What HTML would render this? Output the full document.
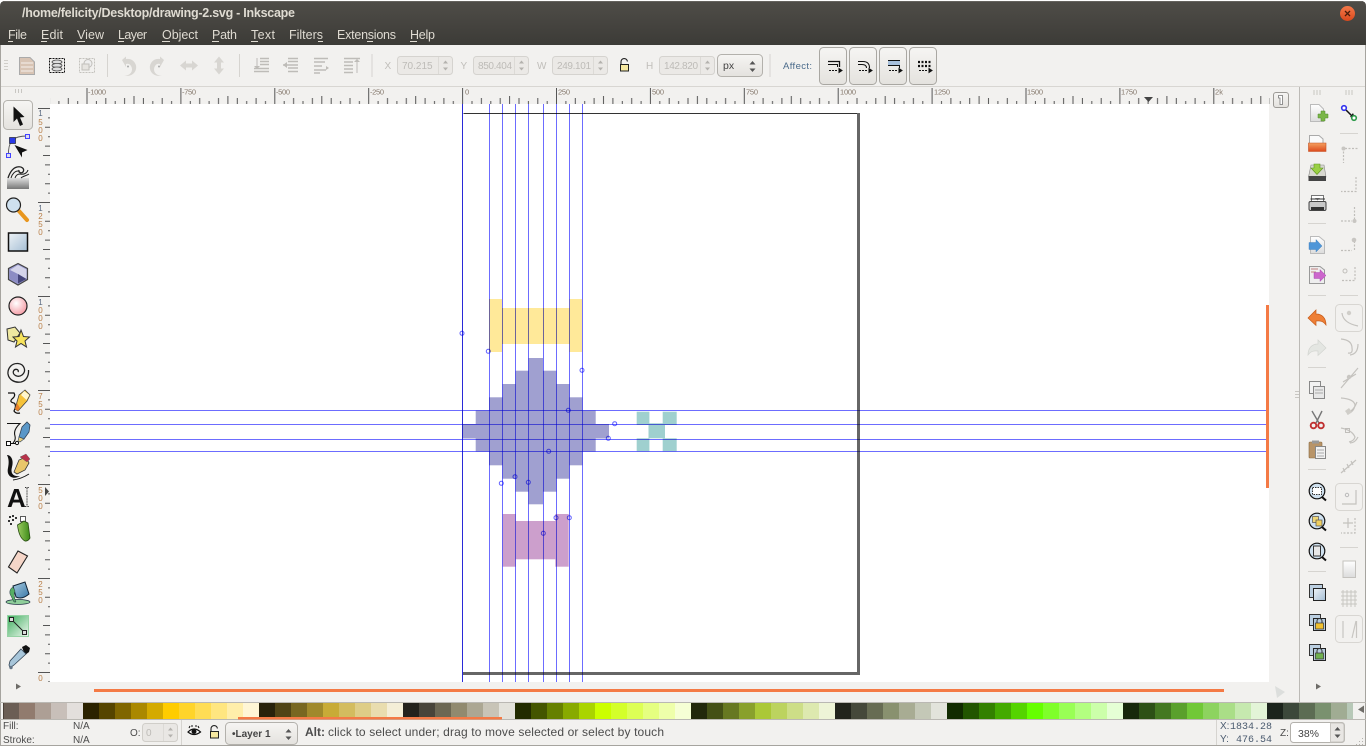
<!DOCTYPE html>
<html lang="en">
<head>
<meta charset="utf-8">
<title>drawing-2.svg - Inkscape</title>
<style>
html,body{margin:0;padding:0;background:#fff;width:1366px;height:746px;overflow:hidden}
svg{display:block}
text{font-family:"Liberation Sans",sans-serif}
.m{font-size:12.5px;fill:#dfdbd2}
.r{font-size:7.5px;fill:#85786c}
.v{font-size:8px;text-anchor:middle;fill:#b97f48}
.v1{font-size:8px;text-anchor:middle;fill:#5a6a80}
.s{font-size:10px;fill:#4c4c4c}
.d{font-size:10px;fill:#bdbbb7}
.l{font-size:10px;fill:#c0beba}
.sep{stroke:#d6d4d0;stroke-width:1}
.dis{fill:#d8d6d2}
.ln{stroke:#c4c2be;stroke-width:1.2;fill:none}
.dash{stroke:#c0bebA;stroke-width:1.2;stroke-dasharray:2 1.5;fill:none}
.sw rect{height:16px;width:16px}
.g{fill:none;stroke:#6c6cff;stroke-width:1;mix-blend-mode:multiply}
.c{fill:none;stroke:#6060ff;stroke-width:1;mix-blend-mode:multiply}
</style>
</head>
<body>
<svg width="1366" height="746" viewBox="0 0 1366 746" xmlns="http://www.w3.org/2000/svg">
<defs>
<linearGradient id="tb" x1="0" y1="0" x2="0" y2="1"><stop offset="0" stop-color="#4f4d48"/><stop offset="1" stop-color="#3c3b37"/></linearGradient>
<linearGradient id="btn" x1="0" y1="0" x2="0" y2="1"><stop offset="0" stop-color="#f6f5f3"/><stop offset="1" stop-color="#e4e2de"/></linearGradient>
<linearGradient id="cl" x1="0" y1="0" x2="0" y2="1"><stop offset="0" stop-color="#f5794a"/><stop offset="1" stop-color="#d9481c"/></linearGradient>
<linearGradient id="blu" x1="0" y1="0" x2="1" y2="1"><stop offset="0" stop-color="#eef3f7"/><stop offset="1" stop-color="#a5bed4"/></linearGradient>
<linearGradient id="gry" x1="0" y1="0" x2="0" y2="1"><stop offset="0" stop-color="#e0e0e0"/><stop offset="1" stop-color="#777"/></linearGradient>
<linearGradient id="grn" x1="0" y1="0" x2="1" y2="1"><stop offset="0" stop-color="#3fae5e"/><stop offset="1" stop-color="#eef8ef"/></linearGradient>
<linearGradient id="org" x1="0" y1="0" x2="0" y2="1"><stop offset="0" stop-color="#f4a060"/><stop offset="1" stop-color="#dc4a1c"/></linearGradient>
<linearGradient id="pg" x1="0" y1="0" x2="0" y2="1"><stop offset="0" stop-color="#fff"/><stop offset="1" stop-color="#dcdcdc"/></linearGradient>
<linearGradient id="can" x1="0" y1="0" x2="1" y2="0"><stop offset="0" stop-color="#9ccc60"/><stop offset="1" stop-color="#3c8a18"/></linearGradient>
<linearGradient id="bkt" x1="0" y1="0" x2="1" y2="1"><stop offset="0" stop-color="#a9cce0"/><stop offset="1" stop-color="#3a78a8"/></linearGradient>
<radialGradient id="pk" cx=".4" cy=".35" r=".8"><stop offset="0" stop-color="#fff"/><stop offset="1" stop-color="#f28a95"/></radialGradient>
<pattern id="rt" patternUnits="userSpaceOnUse" x="86.5" y="88" width="93.9" height="16">
<path stroke="#555" stroke-width="1" fill="none" d="M.5 0V16M9.9 13V16M19.3 10V16M28.7 13V16M38.1 10V16M47.5 8V16M56.9 10V16M66.3 13V16M75.7 10V16M85.1 13V16"/>
</pattern>
<pattern id="rl" patternUnits="userSpaceOnUse" x="38" y="108" width="12" height="94">
<path stroke="#555" stroke-width="1" fill="none" d="M0 .5H12M10 9.9H12M7 19.3H12M10 28.7H12M7 38.1H12M5 47.5H12M7 56.9H12M10 66.3H12M7 75.7H12M10 85.1H12"/>
</pattern>
</defs>

<!-- window -->
<rect x="0" y="45" width="1366" height="701" fill="#f2f1ef"/>
<path d="M0 45V6Q0 1 5 1H1361Q1366 1 1366 6V45Z" fill="url(#tb)"/>
<path d="M3 1.5H1363" stroke="#65635e"/>
<text x="22" y="17" font-size="12.5" font-weight="700" fill="#dfdbd2" textLength="273" lengthAdjust="spacing">/home/felicity/Desktop/drawing-2.svg - Inkscape</text>
<circle cx="1347.5" cy="13.5" r="7.5" fill="url(#cl)"/>
<path d="M1345 11L1350 16M1350 11L1345 16" stroke="#4a1c0a" stroke-width="1.3"/>

<!-- menu -->
<g>
<text class="m" x="8" y="39" textLength="19">File</text>
<text class="m" x="41" y="39" textLength="22">Edit</text>
<text class="m" x="77" y="39" textLength="27">View</text>
<text class="m" x="118" y="39" textLength="29">Layer</text>
<text class="m" x="162" y="39" textLength="36">Object</text>
<text class="m" x="212" y="39" textLength="25">Path</text>
<text class="m" x="251" y="39" textLength="24">Text</text>
<text class="m" x="289" y="39" textLength="34">Filters</text>
<text class="m" x="337" y="39" textLength="59">Extensions</text>
<text class="m" x="410" y="39" textLength="25">Help</text>
<path stroke="#dfdbd2" d="M8 41.5H13M41 41.5H47M77 41.5H85M118 41.5H124M162 41.5H170M212 41.5H219M251 41.5H258M318 41.5H323M367 41.5H373M410 41.5H417"/>
</g>

<!-- top toolbar -->
<path d="M4 60.5H8M4 63.5H8M4 66.5H8M4 69.5H8" stroke="#d0cec9"/>
<path d="M19.5 57.5H30L34.5 62V74.5H19.5Z" fill="#d8c4b4" stroke="#aaa"/>
<path d="M21 63H33M21 67H33M21 71H33" stroke="#fff" stroke-width=".8"/>
<rect x="49.5" y="58.5" width="15" height="14" fill="none" stroke="#111" stroke-dasharray="2 1"/>
<ellipse cx="57" cy="62" rx="5" ry="2" fill="#ddd" stroke="#444" stroke-width=".8"/>
<ellipse cx="57" cy="65.5" rx="5" ry="2" fill="#ddd" stroke="#444" stroke-width=".8"/>
<ellipse cx="57" cy="69" rx="5" ry="2" fill="#ddd" stroke="#444" stroke-width=".8"/>
<rect x="79.5" y="58.5" width="15" height="14" fill="none" stroke="#c4c2be" stroke-dasharray="2 1"/>
<circle cx="88" cy="63.5" r="4" fill="#eee" stroke="#c0bebA"/><rect x="82" y="64" width="7" height="6" fill="#e6e4e0" stroke="#c0bebA"/>
<path class="sep" d="M107.5 54V77"/>
<path class="dis" d="M122 60L126 56.5V59A8.5 8.5 0 1 1 124 75A6 6 0 0 0 131 66A4.5 4.5 0 0 0 126 64V67Z"/>
<circle cx="128" cy="66.5" r="1" fill="#aaa"/>
<path class="dis" d="M164 60L160 56.5V59A8.5 8.5 0 1 0 162 75A6 6 0 0 1 155 66A4.5 4.5 0 0 1 160 64V67Z"/>
<circle cx="159" cy="66.5" r="1" fill="#aaa"/>
<path class="dis" d="M180 65.5L186 60.5V63.5H192V60.5L198 65.5L192 70.5V67.5H186V70.5Z"/>
<path class="dis" d="M219 56.5L224 62.5H221V68.5H224L219 74.5L214 68.5H217V62.5H214Z"/>
<path class="sep" d="M239.5 54V77"/>
<g stroke="#bebcb8" stroke-width="1.6" fill="none">
<path d="M260 58.5H269M260 61.5H269M260 64.5H269M254 68.5H269M254 71.5H269"/>
<path d="M257 58V67" stroke-width="1"/>
<path d="M288 58.5H298M288 61.5H298M288 68H298M288 71.5H298M283 65H298"/>
<path d="M314 58.5H328M314 62H325M314 66H322M314 70H326M314 73H320"/>
<path d="M344 58.5H360M344 62H353M344 65.5H353M344 69H353M344 72.5H353"/>
<path d="M357 62V73" stroke-width="1"/>
</g>
<path d="M254 66L257 69L260 66Z" fill="#bebcb8"/>
<path d="M283 65L287 62V68Z" fill="#bebcb8"/>
<path d="M326 66L329 68L326 70Z" fill="#bebcb8"/>
<path d="M354 62L357 59L360 62Z" fill="#bebcb8"/>
<path class="sep" d="M372 54V77"/>

<!-- spin boxes -->
<text class="l" x="384.5" y="69">X</text>
<rect x="397.5" y="56.5" width="55" height="18" rx="3" fill="#ebe9e6" stroke="#d5d3cf"/>
<path d="M438.5 57V74" stroke="#dcdad6"/>
<path d="M445.5 60.5L448 63.5H443ZM445.5 70.5L448 67.5H443Z" fill="#b4b2ae"/>
<text class="d" x="402" y="69">70.215</text>
<text class="l" x="460.5" y="69">Y</text>
<rect x="473.5" y="56.5" width="55" height="18" rx="3" fill="#ebe9e6" stroke="#d5d3cf"/>
<path d="M514.5 57V74" stroke="#dcdad6"/>
<path d="M521.5 60.5L524 63.5H519ZM521.5 70.5L524 67.5H519Z" fill="#b4b2ae"/>
<text class="d" x="478" y="69" textLength="34">850.404</text>
<text class="l" x="537" y="69">W</text>
<rect x="552.5" y="56.5" width="55" height="18" rx="3" fill="#ebe9e6" stroke="#d5d3cf"/>
<path d="M593.5 57V74" stroke="#dcdad6"/>
<path d="M600.5 60.5L603 63.5H598ZM600.5 70.5L603 67.5H598Z" fill="#b4b2ae"/>
<text class="d" x="557" y="69" textLength="34">249.101</text>
<path d="M621 64V62A3.2 3.2 0 0 1 627.4 61.5" fill="none" stroke="#222" stroke-width="1.1"/>
<rect x="620.5" y="64.5" width="8" height="6.5" fill="#f6e8a0" stroke="#222"/>
<text class="l" x="646" y="69">H</text>
<rect x="659.5" y="56.5" width="55" height="18" rx="3" fill="#ebe9e6" stroke="#d5d3cf"/>
<path d="M700.5 57V74" stroke="#dcdad6"/>
<path d="M707.5 60.5L710 63.5H705ZM707.5 70.5L710 67.5H705Z" fill="#b4b2ae"/>
<text class="d" x="664" y="69" textLength="34">142.820</text>
<rect x="717.5" y="54.5" width="45" height="22" rx="4" fill="url(#btn)" stroke="#b3b1ac"/>
<text x="723" y="69" font-size="10.5" fill="#444">px</text>
<path d="M752.5 61L755.5 64.5H749.5ZM752.5 72L755.5 68.5H749.5Z" fill="#555"/>
<path class="sep" d="M770 54V77"/>
<text x="783" y="69" font-size="9.5" fill="#4a6a8a" textLength="29">Affect:</text>

<!-- affect buttons -->
<g fill="url(#btn)" stroke="#a9a7a2">
<rect x="819.5" y="47.5" width="27" height="37" rx="4"/>
<rect x="849.5" y="47.5" width="27" height="37" rx="4"/>
<rect x="879.5" y="47.5" width="27" height="37" rx="4"/>
<rect x="909.5" y="47.5" width="27" height="37" rx="4"/>
</g>
<g fill="none" stroke="#111">
<path d="M828 61.5H839.5V67" stroke-width="1.3"/><path d="M828 64.5H837.5V67"/>
<path d="M829 70.5H838" stroke-dasharray="2 1"/><path d="M839 68.5L842 70.5L839 72.5Z" fill="#111"/>
<path d="M858 61.5H863Q869.5 61.5 869.5 68"/><path d="M858 64.5H862Q866.5 64.5 866.5 68"/>
<path d="M859 70.5H868" stroke-dasharray="2 1"/><path d="M869 68.5L872 70.5L869 72.5Z" fill="#111"/>
<path d="M888 65.5H899.5V68"/>
<path d="M889 70.5H898" stroke-dasharray="2 1"/><path d="M899 68.5L902 70.5L899 72.5Z" fill="#111"/>
<path d="M919 70.5H928" stroke-dasharray="2 1"/><path d="M929 68.5L932 70.5L929 72.5Z" fill="#111"/>
<path d="M918 62H931M918 66H931" stroke-dasharray="2 1.5" stroke-width="2.2"/>
</g>
<rect x="888" y="60.5" width="12" height="4.5" fill="#a7c0dc"/>
<path d="M888 60.5H900" stroke="#111"/>

<!-- ruler lines -->
<path d="M0 86.5H1366" stroke="#d8d6d2"/>
<path d="M15.5 89V93M18.5 89V93M21.5 89V93" stroke="#c8c6c2"/>

<!-- rulers -->
<rect x="50" y="88" width="1220" height="16" fill="url(#rt)"/>
<rect x="38" y="104" width="12" height="578" fill="url(#rl)"/>
<g>
<text x="88" y="94.5" textLength="18" class="r">-1000</text>
<text x="182" y="94.5" class="r" textLength="14">-750</text>
<text x="276" y="94.5" class="r" textLength="14">-500</text>
<text x="370" y="94.5" class="r" textLength="14">-250</text>
<text x="465" y="94.5" class="r">0</text>
<text x="558" y="94.5" class="r" textLength="12">250</text>
<text x="652" y="94.5" class="r" textLength="12">500</text>
<text x="746" y="94.5" class="r" textLength="12">750</text>
<text x="840" y="94.5" class="r" textLength="16">1000</text>
<text x="934" y="94.5" class="r" textLength="16">1250</text>
<text x="1027" y="94.5" class="r" textLength="16">1500</text>
<text x="1121" y="94.5" class="r" textLength="16">1750</text>
<text x="1215" y="94.5" class="r" textLength="8">2k</text>
</g>
<g>
<text class="v1" x="40.5" y="116">1</text><text class="v" x="40.5" y="125">5</text><text class="v" x="40.5" y="133">0</text><text class="v" x="40.5" y="141">0</text>
<text class="v1" x="40.5" y="211">1</text><text class="v" x="40.5" y="219">2</text><text class="v" x="40.5" y="227">5</text><text class="v" x="40.5" y="235">0</text>
<text class="v1" x="40.5" y="305">1</text><text class="v" x="40.5" y="313">0</text><text class="v" x="40.5" y="321">0</text><text class="v" x="40.5" y="329">0</text>
<text class="v" x="40.5" y="399">7</text><text class="v" x="40.5" y="407">5</text><text class="v" x="40.5" y="415">0</text>
<text class="v" x="40.5" y="493">5</text><text class="v" x="40.5" y="501">0</text><text class="v" x="40.5" y="509">0</text>
<text class="v" x="40.5" y="587">2</text><text class="v" x="40.5" y="595">5</text><text class="v" x="40.5" y="603">0</text>
<text class="v" x="40.5" y="681">0</text>
</g>
<path d="M1144 97H1153L1148.5 102Z" fill="#444"/>
<path d="M45 487V496L49 491.5Z" fill="#444"/>

<!-- canvas -->
<rect x="50" y="104" width="1219" height="578" fill="#fff"/>
<path d="M463.5 113.5H857" stroke="#333" fill="none"/>
<rect x="857" y="113" width="3" height="562" fill="#666"/>
<rect x="463" y="672" width="397" height="3" fill="#666"/>

<!-- shapes -->
<g fill="#ffe999">
<rect x="489" y="299" width="13" height="53"/><rect x="502" y="308" width="67.5" height="36"/><rect x="569.5" y="299" width="12.5" height="53"/>
</g>
<g fill="#a0a0d0">
<rect x="528.5" y="358" width="14.5" height="146.3"/>
<rect x="515.5" y="370.7" width="41" height="121"/>
<rect x="502.5" y="384" width="67" height="94.7"/>
<rect x="489" y="397.3" width="93.5" height="68"/>
<rect x="475.7" y="410.5" width="120" height="41"/>
<rect x="462.5" y="424" width="146.5" height="14.5"/>
</g>
<g fill="#9fd0cf">
<rect x="636.7" y="411.7" width="12.7" height="13.3"/><rect x="662.7" y="411.7" width="14" height="13.3"/>
<rect x="648.5" y="423.3" width="16.5" height="15"/>
<rect x="636.7" y="438.3" width="12.7" height="13"/><rect x="662.7" y="438.3" width="14" height="13"/>
</g>
<g fill="#cc9fcc">
<rect x="502.7" y="514" width="13" height="52.7"/><rect x="515.7" y="521" width="40" height="38.3"/><rect x="555.3" y="514" width="13.4" height="52.7"/>
</g>

<!-- guides -->
<path class="g" style="stroke:#2a2ad8" d="M462.5 104V682"/>
<path class="g" d="M489.5 104V682M502.5 104V682M515.5 104V682M528.5 104V682M543.5 104V682M556.5 104V682M569.5 104V682M582.5 104V682"/>
<path class="g" d="M50 410.5H1266M50 424.5H1266M50 439.5H1266M50 451.5H1266"/>
<g class="c">
<circle cx="462" cy="333.3" r="2"/><circle cx="488.3" cy="351.3" r="2"/><circle cx="582" cy="370.3" r="2"/><circle cx="568.3" cy="410.3" r="2"/><circle cx="614.7" cy="423.7" r="2"/><circle cx="608.3" cy="438.3" r="2"/><circle cx="548.7" cy="451.3" r="2"/><circle cx="515" cy="476.7" r="2"/><circle cx="501.3" cy="483.3" r="2"/><circle cx="528.3" cy="482.3" r="2"/><circle cx="556" cy="517.7" r="2"/><circle cx="569.3" cy="517.7" r="2"/><circle cx="543.3" cy="533.3" r="2"/>
</g>

<!-- scrollbars -->
<rect x="1266" y="305" width="3" height="183" fill="#f47a45"/>
<rect x="94" y="689" width="1130" height="3" fill="#f47a45"/>
<path d="M1275 686L1285 692L1277 698Z" fill="#dcdedc"/>
<rect x="1273.5" y="92.5" width="15" height="15" rx="2.5" fill="url(#btn)" stroke="#9c9a96"/>
<path d="M1278.5 95.5H1282.5V104.5H1280V98H1278.5Z" fill="#fff" stroke="#777" stroke-width=".8"/>
<path d="M1295 391.5H1299M1295 394.5H1299M1295 397.5H1299" stroke="#c8c6c2"/>

<!-- edges -->
<rect x="0" y="45" width="1" height="700" fill="#a6a49f"/>
<rect x="1365" y="45" width="1" height="700" fill="#a6a49f"/>
<rect x="1299" y="87" width="1" height="615" fill="#bcbab6"/>

<!-- left tools -->
<rect x="3.5" y="100.5" width="29" height="29" rx="4" fill="url(#btn)" stroke="#b4b2ad"/>
<path d="M13.5 106.5V122L17 118.5L20 126L23 124.5L20 117.5L24.5 117Z" fill="#111"/>
<!-- node -->
<path d="M12 140Q17 136 27 136M12 140Q8 146 8.5 155" fill="none" stroke="#555" stroke-width=".9"/>
<rect x="9.5" y="137.5" width="6" height="6" fill="#2a3ae8" stroke="#111" stroke-width=".6"/>
<rect x="25.5" y="134.5" width="4" height="4" fill="#dde" stroke="#44f"/>
<rect x="6.5" y="153.5" width="4" height="4" fill="#dde" stroke="#44f"/>
<path d="M14.5 145L27.5 150L22 152.5L22 157.5Z" fill="#111"/>
<!-- tweak -->
<rect x="7" y="178" width="22" height="11" fill="url(#gry)"/>
<path d="M8 178C10 172 13 168 17 167C22 166 25 169 23 172C21 174 18 172 19 170" fill="none" stroke="#222" stroke-width="1.3"/>
<path d="M11 178C12 174 15 171 18 171M15 178C16 175 18 174 20 174C24 175 27 173 28 170M21 178C23 176 26 176 29 174" fill="none" stroke="#222" stroke-width="1"/>
<!-- zoom -->
<path d="M19 211L27 220" stroke="#e8961e" stroke-width="4" stroke-linecap="round"/>
<circle cx="13.5" cy="205" r="7" fill="#cfe1ef" stroke="#222" stroke-width="1.2"/>
<!-- rect -->
<rect x="8.5" y="233" width="19" height="18" fill="url(#blu)" stroke="#111" stroke-width="1.5"/>
<!-- 3d box -->
<path d="M18 263.5L27.5 268.5V279.5L18 285L8.5 279.5V268.5Z" fill="#9a9ad0" stroke="#444" stroke-width="1.2"/>
<path d="M10 269.5L18 274V283.5L10 279Z" fill="#8c8cc4"/>
<path d="M10 270L18 265L26.5 269.5L26.5 279L18 274Z" fill="#d4d4ea"/>
<path d="M18 274L26.5 279L18 283.5Z" fill="#45457a"/>
<!-- circle -->
<circle cx="18" cy="306" r="9" fill="url(#pk)" stroke="#222" stroke-width="1.2"/>
<!-- star -->
<path d="M7 329L15 327L20 333L14 342L8 340Z" fill="#efe8a0" stroke="#333"/>
<path d="M21 330L23.5 336.5L29.5 337L25 341L26.5 347L21 343.5L15.5 347L17 341L13 337L19 336.5Z" fill="#f7e35c" stroke="#333"/>
<!-- spiral -->
<path d="M18 372C19.5 369.5 15 368 13.5 371C12 375 18 378 22 375C27 371 24 364 18 363.5C11 363 7.5 369 8 374C9 380 15 383 21 382C26 381 29 376 28.5 370" fill="none" stroke="#222" stroke-width="1.3"/>
<!-- pencil -->
<path d="M8 393H14Q16 396 12 399Q9 402 14 403Q17 405 14 411Q16 414 20 413" fill="none" stroke="#111" stroke-width="1.2"/>
<path d="M15 409L19 395L25 390L30 395L27 401L18 411Z" fill="#f6c23a" stroke="#444" stroke-width=".8"/>
<path d="M24 391L29.5 395L26.5 400L21 395Z" fill="#fff6d0"/>
<path d="M15 409L17 403L20 408L18 411Z" fill="#e8802a"/>
<!-- pen -->
<path d="M7 423.5H20Q13 430 15 436Q16 440 13 443" fill="none" stroke="#111" stroke-width="1.1"/>
<rect x="6.5" y="441.5" width="4" height="4" fill="#fff" stroke="#111"/>
<circle cx="17" cy="443" r="1.6" fill="#fff" stroke="#111"/>
<path d="M10.5 443.5H15.5" stroke="#111"/>
<path d="M19 437L22 427L27 422L30 425L29 432L24 439Z" fill="#5a97c8" stroke="#345" stroke-width=".8"/>
<path d="M19 437L24 439L20 442L18 441Z" fill="#e9d080" stroke="#345" stroke-width=".6"/>
<!-- calligraphy -->
<path d="M7 455C11 455 14 460 12 467C10 474 14 477 20 476C14 480 6 477 8 468C9 463 9 459 7 455Z" fill="#111"/>
<path d="M14 472L19 460L26 457L29 463L25 470L17 474Z" fill="#e9c66a" stroke="#333" stroke-width=".8"/>
<path d="M20 457L26 454L30 459L27 462Z" fill="#b8324a" stroke="#555" stroke-width=".4"/>
<path d="M13 480Q21 479 29 474" stroke="#111" fill="none"/>
<!-- text -->
<text x="7" y="507" font-size="26" font-weight="700" fill="#111">A</text>
<path d="M25 487.5H29M27 488V506M25 506.5H29" stroke="#333" stroke-dasharray="1 .6" fill="none"/>
<!-- spray -->
<path d="M9 516h2v2h-2zM12 515h2v2h-2zM15 517h2v2h-2zM8 520h2v2h-2zM12 519h2v2h-2zM10 523h2v2h-2z" fill="#333"/>
<rect x="20.5" y="516.5" width="5" height="5" fill="#fff" stroke="#333" stroke-width=".8"/>
<path d="M17.5 525L24 521L28 523L30 538Q28 541.5 25 541Q19 538 17.500 525Z" fill="url(#can)" stroke="#264a10" stroke-width=".8"/>
<!-- eraser -->
<path d="M18 551L27.500 556L17 573L8.500 567Z" fill="#f6d6c8" stroke="#222" stroke-width="1.1"/>
<!-- bucket -->
<ellipse cx="18" cy="602" rx="12" ry="2.5" fill="#8fce9a" stroke="#234" stroke-width=".7"/>
<path d="M13 586L25 582L29 594Q22 600 16 597Z" fill="url(#bkt)" stroke="#123" stroke-width="1"/>
<path d="M13 587Q9 589 10 594Q12 598 14 602H16Q13 595 15 591Z" fill="#56ae64" stroke="#234" stroke-width=".5"/>
<!-- gradient -->
<rect x="7.5" y="615.5" width="21" height="21" fill="url(#grn)" stroke="#97d2a5"/>
<path d="M12 620L24 632" stroke="#222"/>
<rect x="9.5" y="617.500" width="4" height="4" fill="#ddd" stroke="#222"/>
<rect x="22.5" y="630.500" width="4" height="4" fill="#ddd" stroke="#222"/>
<!-- dropper -->
<path d="M22 647L26 645L30 648L29 652L25 655Z" fill="#111"/>
<path d="M21 649L26 654L14 665L10 668L9 665L10 661Z" fill="#a8c6da" stroke="#345" stroke-width=".8"/>
<circle cx="11" cy="667.500" r="1.7" fill="#678"/>
<path d="M16 683.500V689.500L21 686.500Z" fill="#6e6c68"/>

<!-- command bar -->
<path d="M1314 90V95M1317 90V95M1320 90V95M1346 90V95M1349 90V95M1352 90V95" stroke="#c8c6c2"/>
<path d="M1310.500 104.500H1319L1323.500 109V121.500H1310.500Z" fill="url(#pg)" stroke="#bbb"/>
<path d="M1318 114H1321V111H1325V114H1328V118H1325V121H1321V118H1318Z" fill="#7ab648" stroke="#4f8a2a" stroke-width=".5"/>
<path d="M1309.500 135.500H1319L1323 139V144H1309.500Z" fill="#fafafa" stroke="#aaa"/>
<path d="M1308.500 143H1326V151.500H1308.500Z" fill="url(#org)" stroke="#c44e20" stroke-width=".6"/>
<path d="M1311 165H1324L1326 177H1308.500Z" fill="#d8d8d0" stroke="#888" stroke-width=".6"/>
<rect x="1308.500" y="176" width="17.5" height="5" fill="#444"/>
<path d="M1314 164H1320V168H1323L1317 174.500L1311 168H1314Z" fill="#9ad044" stroke="#5f9420" stroke-width=".6"/>
<rect x="1311.500" y="195.500" width="12" height="7" fill="#fff" stroke="#777"/>
<rect x="1309" y="201.500" width="17" height="9" rx="1.5" fill="#c8c8c8" stroke="#444"/>
<rect x="1311" y="207" width="13" height="3" fill="#333"/>
<path d="M1315 198H1320L1317.500 200.500Z" fill="#888"/>
<path d="M1310.500 199H1325" stroke="#333"/>
<path d="M1310.500 236.500H1319L1324.500 241V253.500H1310.500Z" fill="url(#pg)" stroke="#bbb"/>
<path d="M1309 242.500H1316V239.500L1322 246L1316 252V249.500H1309Z" fill="#4f96d8" stroke="#3a7ab8" stroke-width=".4"/>
<path d="M1309.500 266.500H1320L1324.500 270V283.500H1309.500Z" fill="#eee" stroke="#999"/>
<path d="M1311 269H1318M1311 272H1316" stroke="#c99" stroke-width="1.2"/>
<path d="M1314 272.500H1320V269.500L1326 275.500L1320 281.500V278.500H1314Z" fill="#cc66cc" stroke="#a040a8" stroke-width=".4"/>
<path d="M1308 318L1316 310V314C1322 314 1326 318 1326 325C1323 321 1320 320.500 1316 321V325.500Z" fill="#ee7f36" stroke="#c65a18" stroke-width=".7"/>
<path d="M1326 348L1318 340V344C1312 344 1308 348 1308 355C1311 351 1314 350.500 1318 351V355.500Z" fill="#e4e6e2" stroke="#d2d4d0" stroke-width=".7"/>
<rect x="1309.500" y="381.500" width="11" height="12" fill="#f2f2f2" stroke="#888"/>
<rect x="1313.500" y="386.500" width="11" height="12" fill="#e8e8e8" stroke="#888"/>
<path d="M1315 390H1323M1315 393H1323" stroke="#aaa"/>
<path d="M1312 411L1319 423M1322 411L1316 423" stroke="#777" stroke-width="1.4"/>
<circle cx="1313.500" cy="425.500" r="2.8" fill="none" stroke="#c03030" stroke-width="1.9"/>
<circle cx="1321" cy="425.500" r="2.8" fill="none" stroke="#c03030" stroke-width="1.9"/>
<rect x="1309" y="442" width="13" height="16" rx="1" fill="#b89468" stroke="#8a6a40" stroke-width=".6"/>
<rect x="1312" y="440.500" width="7" height="3" fill="#999"/>
<rect x="1315.500" y="446.500" width="10" height="12" fill="#f2f2f2" stroke="#888"/>
<path d="M1317 450H1324M1317 453H1324M1317 456H1324" stroke="#aaa"/>
<circle cx="1317" cy="491" r="7.8" fill="#cfe1ef" stroke="#111" stroke-width="1.2"/>
<rect x="1312.500" y="487.500" width="9" height="7" fill="#fff" stroke="#333" stroke-dasharray="1.5 1"/>
<path d="M1322 497L1326 500.500" stroke="#111" stroke-width="2"/>
<circle cx="1317" cy="521" r="7.8" fill="#cfe1ef" stroke="#111" stroke-width="1.2"/>
<rect x="1312.500" y="516.500" width="6" height="6" fill="#f0d878" stroke="#555" stroke-width=".7"/>
<rect x="1316" y="520" width="6" height="6" fill="#f0d060" stroke="#555" stroke-width=".7"/>
<path d="M1322 527L1326 530.500" stroke="#111" stroke-width="2"/>
<circle cx="1317" cy="551" r="7.8" fill="#cfe1ef" stroke="#111" stroke-width="1.2"/>
<rect x="1313.500" y="546" width="7" height="10" fill="#e8e8e8" stroke="#333"/>
<path d="M1322 557L1326 560.500" stroke="#111" stroke-width="2"/>
<rect x="1309.500" y="584.500" width="13" height="13" fill="#bcd0e2" stroke="#333"/>
<rect x="1313.500" y="588.500" width="12" height="12" fill="url(#blu)" stroke="#222"/>
<rect x="1309.500" y="614.500" width="11" height="11" fill="#bcd0e2" stroke="#333"/>
<rect x="1313.500" y="618.500" width="12" height="12" fill="#b6cadc" stroke="#222"/>
<rect x="1315.500" y="623" width="8" height="6" fill="#f0c030" stroke="#333" stroke-width=".7"/>
<path d="M1317 623V621A2.5 2.5 0 0 1 1322 621V623" fill="none" stroke="#333"/>
<rect x="1309.500" y="644.500" width="11" height="11" fill="#bcd0e2" stroke="#333"/>
<rect x="1313.500" y="648.500" width="12" height="12" fill="#b6cadc" stroke="#222"/>
<rect x="1315.500" y="653" width="8" height="6" fill="#70b050" stroke="#333" stroke-width=".7"/>
<path d="M1317 653V651A2.5 2.5 0 0 1 1322 651V653" fill="none" stroke="#333"/>
<path d="M1316 683.500V689.500L1321 686.500Z" fill="#6e6c68"/>
<path d="M1308 223.500H1326M1308 295.500H1326M1308 367.500H1326M1308 469.500H1326M1308 571.500H1326" stroke="#d6d4d0"/>

<!-- snap bar -->
<path d="M1344 108L1354 118" stroke="#111" stroke-width="1.5"/>
<path d="M1350 117L1355 118L1353 113Z" fill="#111"/>
<circle cx="1344" cy="108" r="2.3" fill="#fff" stroke="#3333ee" stroke-width="1.6"/>
<circle cx="1354" cy="118" r="2.3" fill="#fff" stroke="#2d9a4a" stroke-width="1.6"/>
<path d="M1340 133.500H1358M1340 295.500H1358M1340 547.500H1358" stroke="#d6d4d0"/>
<g class="dash">
<path d="M1343.500 148V163M1345 148.500H1358"/>
<path d="M1356 177V191.500H1341"/>
<path d="M1354.500 207V220M1341 221H1352"/>
<path d="M1354.500 241V250M1341 250.500H1352"/>
<path d="M1355 267V280.500H1341"/>
</g>
<circle cx="1343.500" cy="148.500" r="2" fill="#c8c6c2"/>
<circle cx="1354.500" cy="221" r="2" fill="#c8c6c2"/>
<circle cx="1354" cy="240" r="2.3" fill="#c8c6c2"/>
<circle cx="1345" cy="271" r="2" fill="none" stroke="#c0bebA"/>
<rect x="1335.500" y="304.500" width="27" height="27" rx="4" fill="#f2f1ef" stroke="#d8d6d2"/>
<path d="M1342 313Q1343 323 1358 326" class="ln"/><circle cx="1349" cy="313" r="2.2" fill="#d0cec9"/>
<path d="M1341 339Q1352 340 1352 348Q1353 354 1348 353M1358 344Q1358 354 1350 355" class="ln"/>
<path d="M1341 388L1358 368M1343 382L1356 374" class="ln"/><circle cx="1349" cy="377" r="2.2" fill="#c8c6c2"/>
<path d="M1341 398Q1354 399 1355 405Q1354 412 1347 414M1357 402Q1354 410 1348 413" class="ln"/><path d="M1345 411L1349 408L1352 412L1348 415Z" fill="#d0cec9"/>
<path d="M1341 428Q1352 430 1355 437Q1354 441 1349 442M1358 437Q1355 443 1350 443" class="ln"/><rect x="1345.500" y="428.500" width="4" height="4" fill="none" stroke="#c0bebA"/>
<path d="M1341 473L1356 460M1343 468L1345 472M1347 464L1349 468M1351 461L1353 465" class="ln"/>
<rect x="1335.500" y="483.500" width="27" height="27" rx="4" fill="#f2f1ef" stroke="#d8d6d2"/>
<path d="M1356 490V504H1342" class="ln"/><circle cx="1347" cy="495" r="1.7" fill="none" stroke="#bbb"/>
<path d="M1348 518V528M1343 523H1353" class="ln"/>
<path class="dash" d="M1355 518V533H1341"/>
<rect x="1343" y="561" width="12.5" height="16.5" fill="url(#pg)" stroke="#c4c2be"/>
<path d="M1341 592H1357M1341 596H1357M1341 600H1357M1341 604H1357M1343 590V607M1347 590V607M1351 590V607M1355 590V607" stroke="#c8c6c2" stroke-width="1" fill="none"/>
<rect x="1335.500" y="615.500" width="27" height="27" rx="4" fill="#f2f1ef" stroke="#d8d6d2"/>
<path d="M1343 621V638M1356 621L1352 638M1356.500 621V638" stroke="#c8c6c2" fill="none" stroke-width="1.2"/>

<!-- palette -->
<rect x="0" y="702" width="1366" height="1" fill="#bab8b3"/>
<rect x="0" y="719" width="1366" height="1" fill="#bab8b3"/>
<g class="sw" transform="translate(0 703)">
<rect x="3" fill="#6b5e55"/><rect x="19" fill="#917b6e"/><rect x="35" fill="#ad9f95"/><rect x="51" fill="#c8bfb9"/><rect x="67" fill="#e3dfdc"/>
<rect x="83" fill="#2b2200"/><rect x="99" fill="#554400"/><rect x="115" fill="#806600"/><rect x="131" fill="#aa8800"/><rect x="147" fill="#d4aa00"/><rect x="163" fill="#ffcc00"/><rect x="179" fill="#ffd42a"/><rect x="195" fill="#ffdd55"/><rect x="211" fill="#ffe680"/><rect x="227" fill="#ffeeaa"/><rect x="243" fill="#fff6d5"/>
<rect x="259" fill="#28220b"/><rect x="275" fill="#504416"/><rect x="291" fill="#786721"/><rect x="307" fill="#a0892c"/><rect x="323" fill="#c8ab37"/><rect x="339" fill="#d3bc5f"/><rect x="355" fill="#decd87"/><rect x="371" fill="#e9ddaf"/><rect x="387" fill="#f4eed7"/>
<rect x="403" fill="#24221c"/><rect x="419" fill="#48443a"/><rect x="435" fill="#6c6753"/><rect x="451" fill="#918a6f"/><rect x="467" fill="#aca793"/><rect x="483" fill="#c8c4b7"/><rect x="499" fill="#e3e2db"/>
<rect x="515" fill="#222b00"/><rect x="531" fill="#445500"/><rect x="547" fill="#668000"/><rect x="563" fill="#88aa00"/><rect x="579" fill="#aad400"/><rect x="595" fill="#ccff00"/><rect x="611" fill="#d4ff2a"/><rect x="627" fill="#ddff55"/><rect x="643" fill="#e5ff80"/><rect x="659" fill="#eeffaa"/><rect x="675" fill="#f6ffd5"/>
<rect x="691" fill="#22280b"/><rect x="707" fill="#445016"/><rect x="723" fill="#677821"/><rect x="739" fill="#89a02c"/><rect x="755" fill="#abc837"/><rect x="771" fill="#bcd35f"/><rect x="787" fill="#cdde87"/><rect x="803" fill="#dde9af"/><rect x="819" fill="#eef4d7"/>
<rect x="835" fill="#22241c"/><rect x="851" fill="#45483a"/><rect x="867" fill="#676c53"/><rect x="883" fill="#89916f"/><rect x="899" fill="#a8ac93"/><rect x="915" fill="#c4c8b7"/><rect x="931" fill="#e2e3db"/>
<rect x="947" fill="#112b00"/><rect x="963" fill="#225500"/><rect x="979" fill="#338000"/><rect x="995" fill="#44aa00"/><rect x="1011" fill="#55d400"/><rect x="1027" fill="#66ff00"/><rect x="1043" fill="#7fff2a"/><rect x="1059" fill="#99ff55"/><rect x="1075" fill="#b3ff80"/><rect x="1091" fill="#ccffaa"/><rect x="1107" fill="#e5ffd5"/>
<rect x="1123" fill="#17280b"/><rect x="1139" fill="#2d5016"/><rect x="1155" fill="#447821"/><rect x="1171" fill="#5aa02c"/><rect x="1187" fill="#71c837"/><rect x="1203" fill="#8dd35f"/><rect x="1219" fill="#aade87"/><rect x="1235" fill="#c6e9af"/><rect x="1251" fill="#e3f4d7"/>
<rect x="1267" fill="#1c241c"/><rect x="1283" fill="#3c483a"/><rect x="1299" fill="#5c6c53"/><rect x="1315" fill="#7a916f"/><rect x="1331" fill="#a0ac93"/><rect x="1347" style="width:6px" fill="#b7c8b7"/>
</g>
<rect x="3" y="703" width="1" height="16" fill="#4a4038"/>
<path d="M1364 705.500V713L1358 709.500Z" fill="#6e6c68"/>
<rect x="238" y="717" width="264" height="2.5" fill="#f47a45"/>

<!-- status bar -->
<text class="s" x="3" y="729">Fill:</text>
<text class="s" x="3" y="743">Stroke:</text>
<text class="s" x="73" y="729">N/A</text>
<text class="s" x="73" y="743">N/A</text>
<text class="s" x="130" y="736">O:</text>
<rect x="142.500" y="723.500" width="35" height="18" rx="3" fill="#e9e7e4" stroke="#d0cec9"/>
<path d="M163.500 724V741" stroke="#dcdad6"/>
<path d="M170.500 727.500L173 730.500H168ZM170.500 737.500L173 734.500H168Z" fill="#b4b2ae"/>
<text class="d" x="146" y="736">0</text>
<path d="M181.500 720V745" stroke="#d6d4d0"/>
<path d="M188 732Q194 726 200.500 732Q194 737 188 732Z" fill="#fff" stroke="#111" stroke-width="1.2"/>
<circle cx="194" cy="731.500" r="2.5" fill="#111"/>
<path d="M189 728L190 726M192 727V725M196 727V725M199 728L198 726" stroke="#111"/>
<path d="M211 731V729A3.2 3.2 0 0 1 217.400 728.500" fill="none" stroke="#222" stroke-width="1.1"/>
<rect x="210.500" y="731.500" width="8" height="6.5" fill="#f6e8a0" stroke="#222"/>
<rect x="225.500" y="722.500" width="72" height="22" rx="4" fill="url(#btn)" stroke="#b3b1ac"/>
<text x="232" y="737" font-size="10" font-weight="700" fill="#444">•Layer 1</text>
<path d="M288.500 729L291.500 732.500H285.500ZM288.500 740L291.500 736.500H285.500Z" fill="#555"/>
<text x="305" y="736" font-size="12" font-weight="700" fill="#4c4c4c" textLength="20">Alt:</text>
<text x="328" y="736" font-size="12" fill="#4c4c4c" textLength="336">click to select under; drag to move selected or select by touch</text>
<path d="M1216.500 720V745" stroke="#d6d4d0"/>
<text x="1220" y="729" font-size="10" fill="#4c5c70">X:</text>
<text x="1220" y="742" font-size="10" fill="#4c5c70">Y:</text>
<text x="1272" y="729" font-size="10" fill="#4c5c70" text-anchor="end" style="font-family:'Liberation Mono',monospace">1834.28</text>
<text x="1272" y="742" font-size="10" fill="#4c5c70" text-anchor="end" style="font-family:'Liberation Mono',monospace">476.54</text>
<text class="s" x="1280" y="736">Z:</text>
<rect x="1290.500" y="722.500" width="54" height="20" rx="3" fill="#fff" stroke="#b3b1ac"/>
<path d="M1330.500 723H1341Q1344 723 1344 726V739Q1344 742 1341 742H1330.500Z" fill="#e8e6e3" stroke="#c8c6c2"/>
<text x="1298" y="737" font-size="10.5" fill="#444">38%</text>
<path d="M1337.500 727L1340.500 730.500H1334.500ZM1337.500 738L1340.500 734.500H1334.500Z" fill="#555"/>
<path d="M1362 738h1v1h-1zM1359 741h1v1h-1zM1362 741h1v1h-1zM1356 744h1v1h-1zM1359 744h1v1h-1zM1362 744h1v1h-1z" fill="#b5b3ae"/>
<rect x="0" y="745" width="1366" height="1" fill="#a6a49f"/>
</svg>
</body>
</html>
